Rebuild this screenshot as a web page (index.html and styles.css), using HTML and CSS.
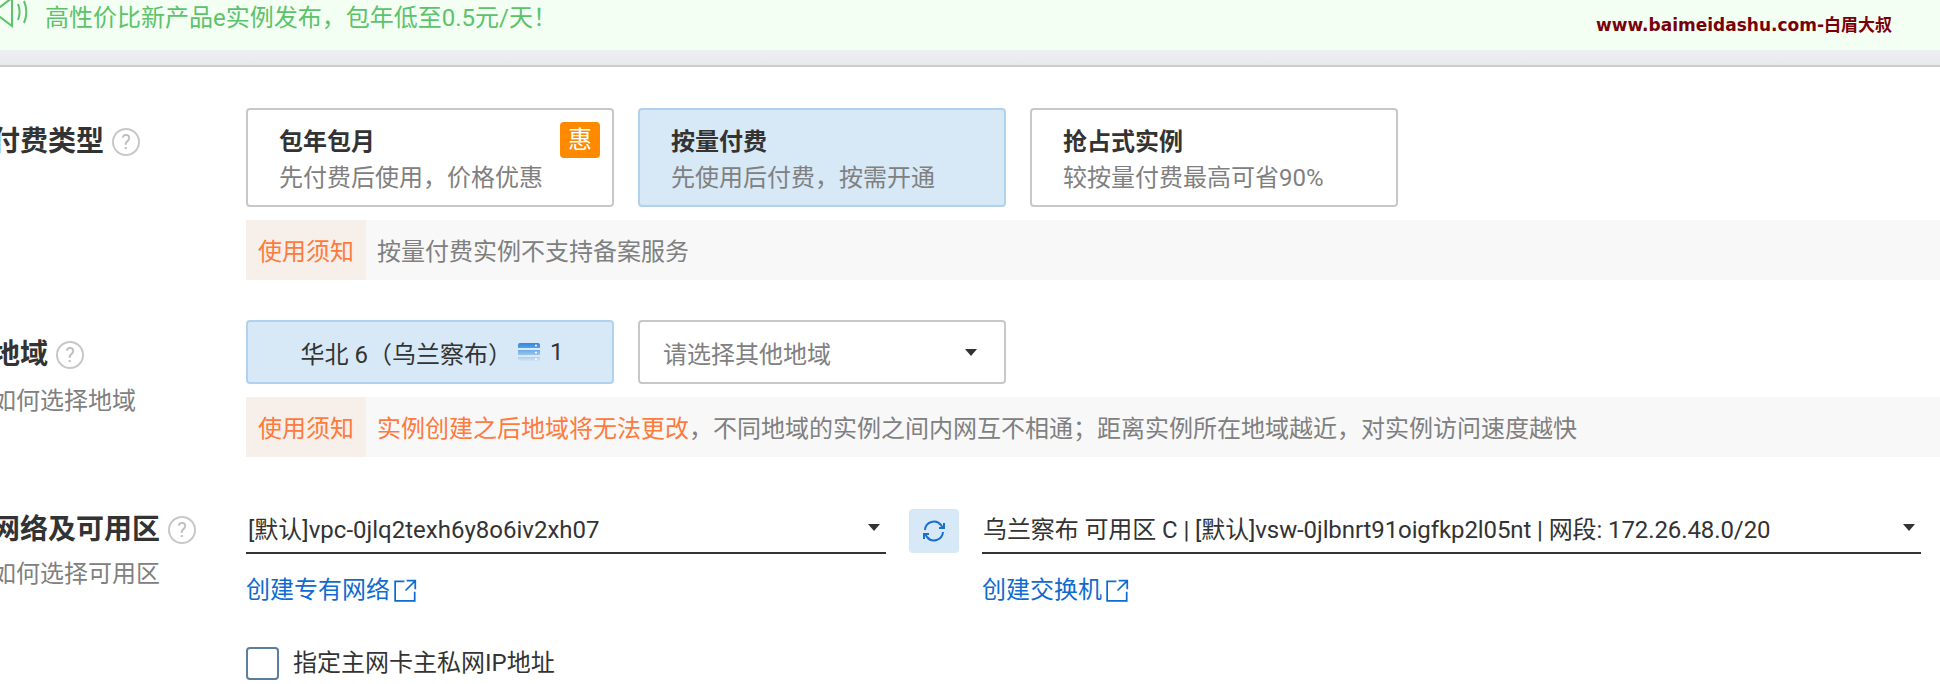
FILE: index.html
```html
<!DOCTYPE html>
<html lang="zh-CN">
<head>
<meta charset="utf-8">
<title>实例购买</title>
<link rel="stylesheet" href="styles.css">
</head>
<body>
<header class="banner">
  <div class="banner-main">
    <svg class="speaker" width="30" height="32" viewBox="0 0 30 32" fill="none" stroke="#5cc26c" stroke-width="2"><path d="M-6 10h6L12 1v28L0 20h-6z"/><path d="M18 7c2 5 2 11 0 16"/><path d="M24 4c3 7 3 15 0 22"/></svg>
    <span>高性价比新产品e实例发布，包年低至0.5元/天！</span>
  </div>
  <span class="mark">www.baimeidashu.com-白眉大叔</span>
</header>
<div class="strip"></div>
<main class="form">
  <section class="row row-pay">
    <div class="label"><h2>付费类型<i class="help">?</i></h2></div>
    <div class="body">
      <div class="cards">
        <div class="card"><b>包年包月</b><span>先付费后使用，价格优惠</span><em class="badge">惠</em></div>
        <div class="card active"><b>按量付费</b><span>先使用后付费，按需开通</span></div>
        <div class="card"><b>抢占式实例</b><span>较按量付费最高可省90%</span></div>
      </div>
      <div class="notice"><strong>使用须知</strong><p>按量付费实例不支持备案服务</p></div>
    </div>
  </section>
  <section class="row row-region">
    <div class="label"><h2>地域<i class="help">?</i></h2><small>如何选择地域</small></div>
    <div class="body">
      <div class="cards">
        <div class="region active">华北 6（乌兰察布）
          <svg class="stack" width="22" height="20" viewBox="0 0 22 20"><defs><linearGradient id="sg" x1="0" y1="0" x2="0" y2="1"><stop offset="0" stop-color="#2f86dc"/><stop offset="1" stop-color="#cfe4f6"/></linearGradient></defs><path fill="url(#sg)" d="M2 1h18a2 2 0 0 1 2 2v3H0V3a2 2 0 0 1 2-2zM0 8h22v5H0zM0 15h22v2a2 2 0 0 1-2 2H2a2 2 0 0 1-2-2z"/><circle cx="18" cy="3.5" r="1" fill="#fff"/><circle cx="18" cy="10.5" r="1" fill="#fff"/><circle cx="18" cy="17" r="1" fill="#fff"/></svg>
          1</div>
        <div class="dropdown"><span>请选择其他地域</span><i class="caret"></i></div>
      </div>
      <div class="notice"><strong>使用须知</strong><p><span class="warn">实例创建之后地域将无法更改</span>，不同地域的实例之间内网互不相通；距离实例所在地域越近，对实例访问速度越快</p></div>
    </div>
  </section>
  <section class="row row-net">
    <div class="label"><h2>网络及可用区<i class="help">?</i></h2><small>如何选择可用区</small></div>
    <div class="body">
      <div class="net">
        <div class="col col-vpc">
          <div class="select"><span>[默认]vpc-0jlq2texh6y8o6iv2xh07</span><i class="caret"></i></div>
          <a class="link">创建专有网络<svg width="23" height="23" viewBox="0 0 20 20" fill="none" stroke="#0f6bd0" stroke-width="1.5"><path d="M9 2H1v17h17v-8"/><path d="M11 1.5h7.5V9M18 2l-8 8"/></svg></a>
        </div>
        <button class="refresh" type="button"><svg width="24" height="24" viewBox="0 0 24 24" fill="none" stroke="#1a6fd0" stroke-width="2"><path d="M3 11a9 9 0 0 1 16-5l2 3"/><path d="M21 13a9 9 0 0 1-16 5l-2-3"/><path d="M22 4v5h-5M2 20v-5h5"/></svg></button>
        <div class="col col-sw">
          <div class="select tight"><span>乌兰察布 可用区 C | [默认]vsw-0jlbnrt91oigfkp2l05nt | 网段: 172.26.48.0/20</span><i class="caret"></i></div>
          <a class="link">创建交换机<svg width="23" height="23" viewBox="0 0 20 20" fill="none" stroke="#0f6bd0" stroke-width="1.5"><path d="M9 2H1v17h17v-8"/><path d="M11 1.5h7.5V9M18 2l-8 8"/></svg></a>
        </div>
      </div>
      <label class="check"><i class="box"></i>指定主网卡主私网IP地址</label>
    </div>
  </section>
</main>
</body>
</html>
```
FILE: styles.css
```css
html, body { margin: 0; padding: 0; height: 684px; overflow: hidden; background: #fff; }
body { font-family: Roboto, "Noto Sans CJK SC", sans-serif; font-size: 24px; color: #333; }
.banner { height: 50px; background: #f2fff2; display: flex; justify-content: space-between; box-sizing: border-box; padding-right: 48px; overflow: hidden; }
.banner-main { display: flex; align-items: flex-start; color: #5cc26c; line-height: 36px; }
.speaker { display: block; margin-top: -3px; margin-right: 15px; }
.mark { color: #7a0008; font-family: "DejaVu Sans", "Noto Sans CJK SC", sans-serif; font-weight: 700; font-size: 17px; line-height: 21px; margin-top: 15px; }
.strip { height: 15px; background: linear-gradient(#eff0f4, #e8e9ec); border-bottom: 2px solid #ccc; }
.form { padding-top: 41px; }
.row { display: flex; }
.row-region { margin-top: 40px; }
.row-net { margin-top: 52px; }
.label { width: 254px; margin-left: -8px; flex: none; }
.label h2 { margin: 0; font-size: 28px; font-weight: 700; line-height: 40px; color: #333; display: flex; align-items: center; }
.row-pay .label h2 { margin-top: 14px; }
.row-region .label h2 { margin-top: 15px; }
.row-net .label h2 { margin-top: 1px; }
.label small { display: block; font-size: 24px; color: #808080; line-height: 36px; margin-top: 8px; }
.row-net .label small { margin-top: 6px; }
.help { width: 24px; height: 24px; border: 2px solid #c8c8c8; border-radius: 50%; margin-left: 8px; color: #bbb; font-style: normal; font-weight: 400; font-size: 20px; line-height: 24px; text-align: center; }
.body { flex: none; width: 1694px; }
.cards { display: flex; gap: 24px; }
.card { position: relative; width: 368px; height: 99px; box-sizing: border-box; border: 2px solid #c8c8c8; border-radius: 4px; padding: 15px 31px 0; background: #fff; }
.card b, .card span { display: block; line-height: 34px; white-space: nowrap; }
.card b { color: #333; font-weight: 700; }
.card span { color: #808080; margin-top: 2px; }
.active { background: #d7e8f6; border-color: #b0d2ef; }
.badge { position: absolute; top: 12px; right: 12px; width: 40px; height: 36px; background: #ff8a00; border-radius: 4px; color: #fff; font-style: normal; text-align: center; line-height: 36px; }
.notice { display: flex; height: 60px; margin-top: 13px; background: #f8f8f8; line-height: 65px; }
.notice strong { width: 120px; flex: none; background: #f6efea; color: #ff7a3c; font-weight: 400; text-align: center; }
.notice p { margin: 0 0 0 11px; color: #808080; }
.warn { color: #ff7a3c; }
.region, .dropdown { width: 368px; height: 64px; box-sizing: border-box; border-radius: 4px; display: flex; align-items: center; }
.region { border: 2px solid #b0d2ef; justify-content: center; gap: 0; padding-left: 4px; }
.stack { margin: 0 10px 0 6px; }
.dropdown { border: 2px solid #c8c8c8; padding: 0 27px 0 23px; justify-content: space-between; color: #808080; }
.caret { width: 0; height: 0; border-left: 6px solid transparent; border-right: 6px solid transparent; border-top: 7px solid #333; }
.net { display: flex; align-items: flex-start; }
.col-vpc { width: 640px; }
.col-sw { width: 939px; }
.refresh { width: 50px; height: 44px; margin: 0 23px; padding: 0; border: 0; border-radius: 4px; background: #d7e8f6; display: flex; align-items: center; justify-content: center; }
.select { border-bottom: 2px solid #333; display: flex; align-items: center; justify-content: space-between; padding: 0 6px 6px 2px; white-space: nowrap; height: 37px; }
.tight { letter-spacing: -0.1px; padding-left: 1px; }
.link { display: inline-flex; align-items: center; gap: 4px; margin-top: 18px; color: #0f6bd0; line-height: 36px; }
.check { display: flex; align-items: center; margin-top: 37px; line-height: 36px; color: #333; }
.box { width: 29px; height: 29px; border: 2px solid #5b7e9e; border-radius: 4px; margin-right: 14px; flex: none; }
```
